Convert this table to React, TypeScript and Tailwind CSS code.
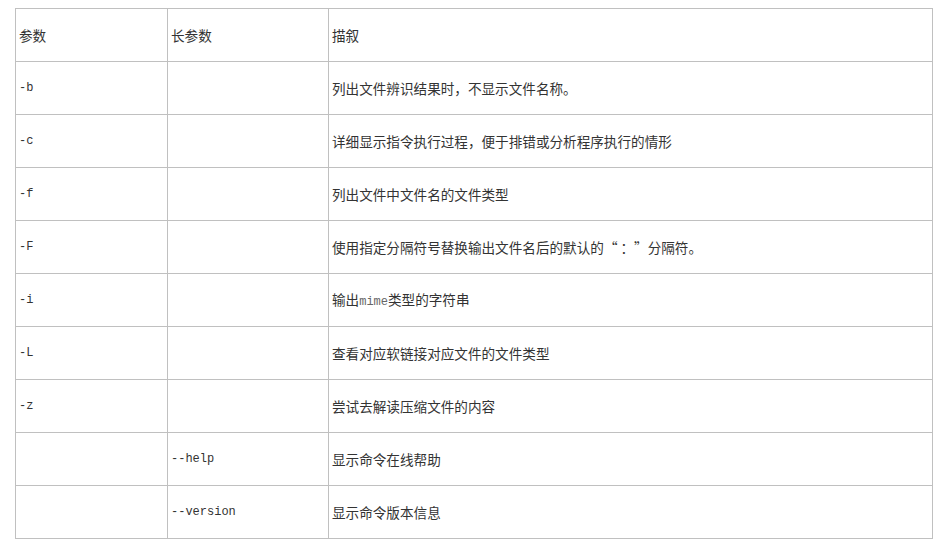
const mono = "font-['Liberation_Mono','Courier_New',monospace] text-[12px]";

const rows: [string, string, React.ReactNode][] = [
  ['-b', '', '列出文件辨识结果时，不显示文件名称。'],
  ['-c', '', '详细显示指令执行过程，便于排错或分析程序执行的情形'],
  ['-f', '', '列出文件中文件名的文件类型'],
  [
    '-F',
    '',
    <>
      使用指定分隔符号替换输出文件名后的默认的
      <span className="inline-block w-[1em] text-right">“</span>
      <span className="pl-[3px]">：</span>
      <span className="inline-block w-[1em] text-left">”</span>
      分隔符。
    </>,
  ],
  ['-i', '', <>输出<span className={`${mono} text-[#666]`}>mime</span>类型的字符串</>],
  ['-L', '', '查看对应软链接对应文件的文件类型'],
  ['-z', '', '尝试去解读压缩文件的内容'],
  ['', '--help', '显示命令在线帮助'],
  ['', '--version', '显示命令版本信息'],
];

const cell = 'border border-[#c0c0c0] px-[3px] align-middle';

export default function App() {
  return (
    <div lang="zh-CN" className="w-[945px] h-[547px] bg-white pt-[8px] pl-[15px] text-[#333] font-['SimSun','Noto_Sans_CJK_SC',sans-serif] text-[13.6px]">
      <table className="border-collapse w-[918px] table-fixed">
        <colgroup>
          <col className="w-[152px]" />
          <col className="w-[161px]" />
          <col />
        </colgroup>
        <tbody>
          <tr className="h-[53px]">
            <td className={cell}>参数</td>
            <td className={cell}>长参数</td>
            <td className={cell}>描叙</td>
          </tr>
          {rows.map(([s, l, d], i) => (
            <tr key={i} className="h-[53px]">
              <td className={`${cell} ${mono}`}>{s}</td>
              <td className={`${cell} ${mono}`}>{l}</td>
              <td className={cell}>{d}</td>
            </tr>
          ))}
        </tbody>
      </table>
    </div>
  );
}
